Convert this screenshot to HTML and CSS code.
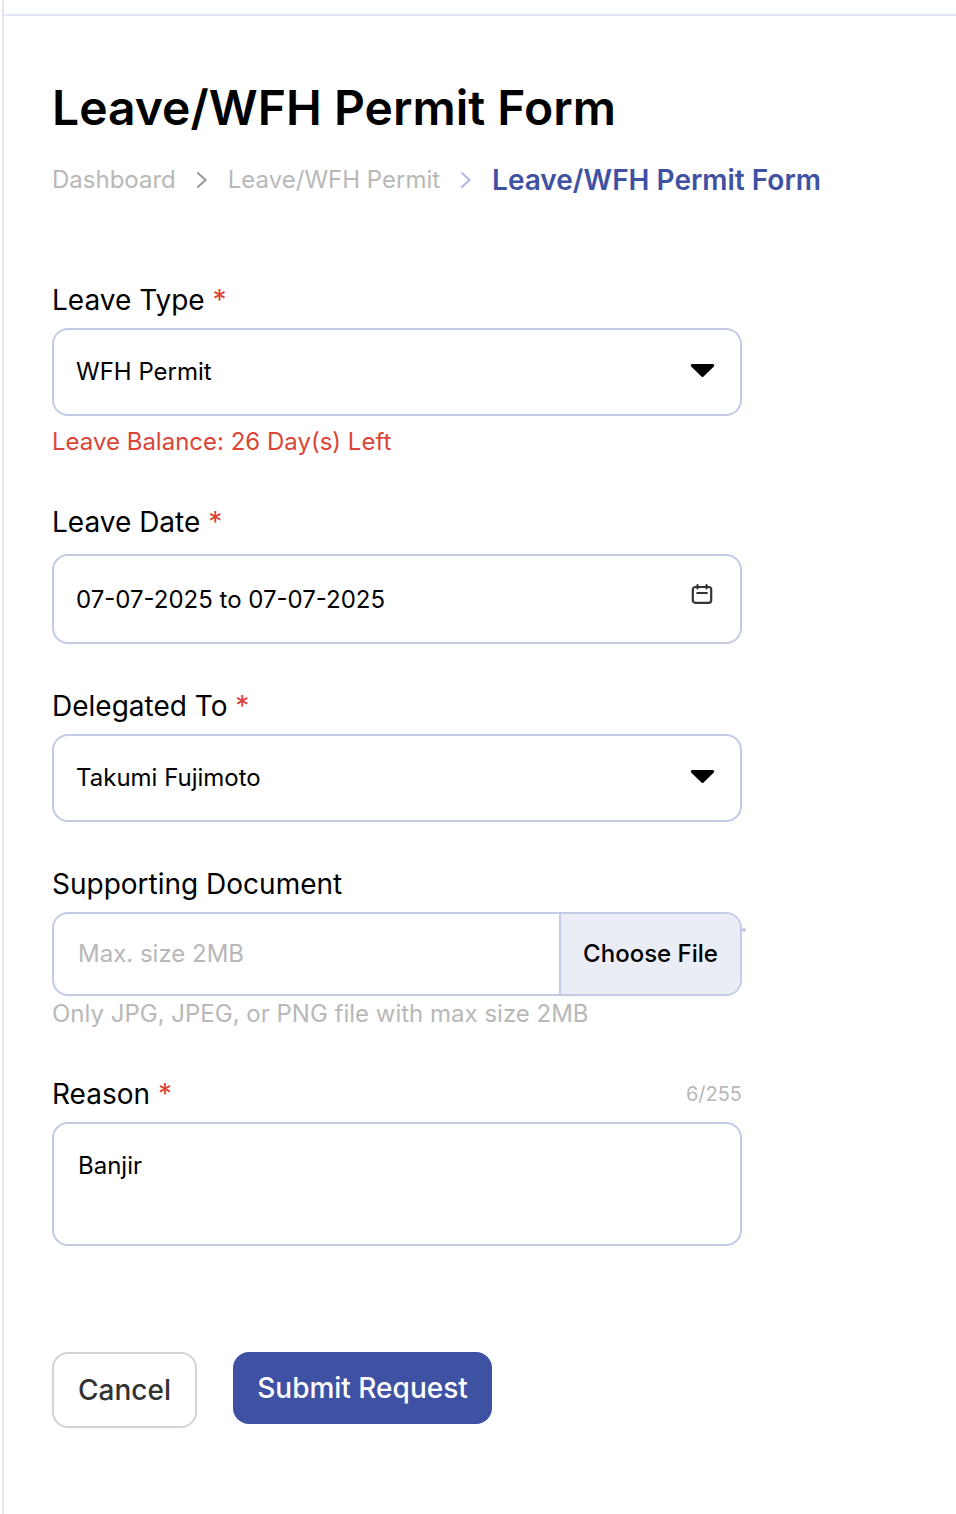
FILE: index.html
```html
<!DOCTYPE html>
<html lang="en">
<head>
<meta charset="utf-8">
<title>Leave/WFH Permit Form</title>
<link rel="stylesheet" href="styles.css">
</head>
<body>
<div class="shell">
  <div class="topbar"></div>
  <main class="content">
    <h1 class="title">Leave/WFH Permit Form</h1>
    <nav class="crumbs">
      <span class="crumb">Dashboard</span>
      <svg class="chevron" width="12" height="18" viewBox="0 0 12 18"><path d="M2 2l7.5 7-7.5 7"/></svg>
      <span class="crumb crumb-parent">Leave/WFH Permit</span>
      <svg class="chevron chevron-active" width="12" height="18" viewBox="0 0 12 18"><path d="M2 2l7.5 7-7.5 7"/></svg>
      <span class="crumb-current">Leave/WFH Permit Form</span>
    </nav>
    <form class="form">
      <section class="field field-type">
        <div class="label"><span>Leave Type</span> <span class="required">*</span></div>
        <div class="control">
          <span class="value">WFH Permit</span>
          <svg class="caret" width="26" height="16" viewBox="0 0 26 16"><path d="M3.2 2.5h20.600l-10.300 10z"/></svg>
        </div>
        <div class="hint hint-error">Leave Balance: 26 Day(s) Left</div>
      </section>
      <section class="field field-date">
        <div class="label"><span>Leave Date</span> <span class="required">*</span></div>
        <div class="control control-date">
          <span class="value value-date">07-07-2025 to 07-07-2025</span>
          <svg class="calendar" width="24" height="24" viewBox="0 0 24 24"><rect x="2.800" y="5" width="18.400" height="15.800" rx="2.500"/><path d="M7.500 3.200v3.200M16.500 3.200v3.200M7.300 11h9.600"/></svg>
        </div>
      </section>
      <section class="field field-delegate">
        <div class="label"><span>Delegated To</span> <span class="required">*</span></div>
        <div class="control">
          <span class="value">Takumi Fujimoto</span>
          <svg class="caret" width="26" height="16" viewBox="0 0 26 16"><path d="M3.2 2.5h20.600l-10.300 10z"/></svg>
        </div>
      </section>
      <section class="field field-document">
        <div class="label"><span>Supporting Document</span></div>
        <div class="control control-file">
          <span class="placeholder">Max. size 2MB</span>
          <span class="choose">Choose File</span>
          <i class="dot"></i>
        </div>
        <div class="hint hint-file">Only JPG, JPEG, or PNG file with max size 2MB</div>
      </section>
      <section class="field field-reason">
        <div class="label-row">
          <div class="label"><span>Reason</span> <span class="required">*</span></div>
          <span class="counter">6/255</span>
        </div>
        <div class="control control-area"><span class="value">Banjir</span></div>
      </section>
      <div class="actions">
        <button type="button" class="button button-cancel">Cancel</button>
        <button type="button" class="button button-submit">Submit Request</button>
      </div>
    </form>
  </main>
</div>
</body>
</html>
```
FILE: styles.css
```css
* { box-sizing: border-box; }
body { margin: 0; background: #fff; color: #000; font-family: Inter, "Liberation Sans", sans-serif; }
.shell { height: 1514px; margin-left: 2px; border-left: 2px solid #e2e5f3; overflow: hidden; }
.topbar { height: 16px; border-bottom: 2px solid #e2e5f3; }
.content { padding: 63px 0 0 48px; }
.title { margin: 0; font-size: 48px; line-height: 58px; font-weight: 600; white-space: nowrap; }
.crumbs { display: flex; align-items: center; height: 34px; margin-top: 26px; white-space: nowrap; }
.crumb { font-size: 24px; line-height: 34px; color: #b8b8b8; }
.crumb-current { font-size: 28px; font-weight: 600; color: #3f51a3; }
.chevron { margin: 0 20px; fill: none; stroke: #999; stroke-width: 2; stroke-linecap: round; }
.chevron-active { stroke: #b2bbdf; }
.form { width: 690px; margin-top: 86px; }
.field-type { height: 222px; }
.field-date { height: 184px; }
.field-delegate { height: 178px; }
.field-document { height: 210px; }
.field-reason { height: 275px; }
.label { height: 45px; line-height: 34px; font-size: 28px; white-space: nowrap; }
.required { color: #db4437; }
.control { position: relative; display: flex; align-items: center; justify-content: space-between; height: 88px; padding: 0 25px 2px 22px; border: 2px solid #c3cae6; border-radius: 16px; font-size: 24px; }
.caret { stroke: #000; stroke-width: 3; stroke-linejoin: round; }
.hint { margin-top: 11px; line-height: 30px; font-size: 24px; white-space: nowrap; }
.hint-error { color: #db4437; }
.field-date .label { height: 49px; }
.control-date { height: 90px; padding-bottom: 0; padding-right: 26px; }
.calendar { margin-bottom: 10px; fill: none; stroke: #333; stroke-width: 2.2; stroke-linecap: round; }
.control-file { height: 84px; padding: 0 0 0 24px; }
.placeholder { padding-bottom: 1px; color: #b8b8b8; }
.choose { display: flex; align-items: center; justify-content: center; align-self: stretch; width: 181px; padding-bottom: 1px; border-left: 2px solid #c3cae6; border-radius: 0 14px 14px 0; background: #eaedf6; font-weight: 500; }
.dot { position: absolute; right: -6px; top: 14px; width: 4px; height: 4px; border-radius: 50%; background: #c3cae6; }
.hint-file { margin-top: 3px; color: #b8b8b8; }
.label-row { display: flex; justify-content: space-between; }
.counter { line-height: 34px; font-size: 20px; color: #b8b8b8; }
.control-area { height: 124px; align-items: flex-start; padding: 27px 24px; line-height: 29px; }
.actions { display: flex; align-items: flex-start; gap: 36px; }
.button { padding: 0; border: 0; border-radius: 16px; font-family: inherit; font-size: 28px; font-weight: 500; }
.button-cancel { width: 145px; height: 76px; border: 2px solid #d3d3d3; background: #fff; color: #333; }
.button-submit { width: 259px; height: 72px; background: #3f51a3; color: #fff; }
```
